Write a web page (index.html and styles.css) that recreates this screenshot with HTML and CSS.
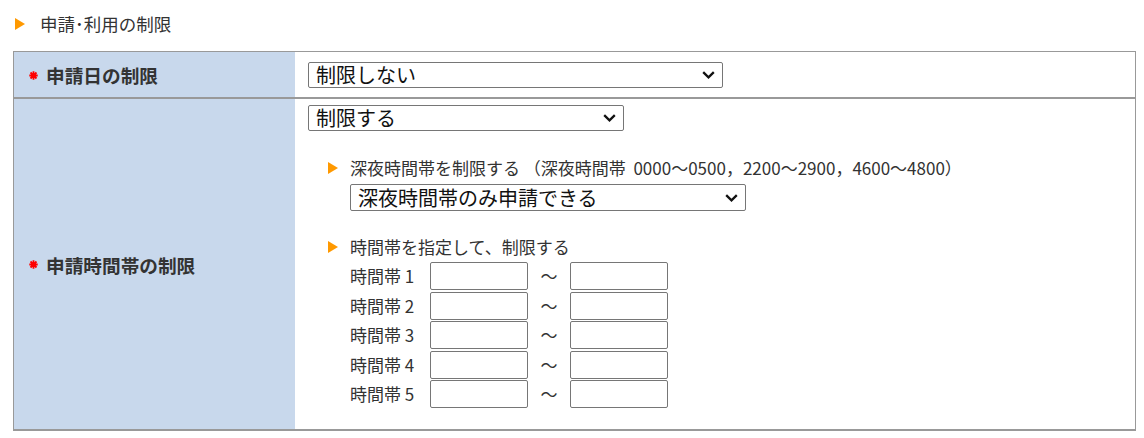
FILE: index.html
```html
<!DOCTYPE html>
<html lang="ja">
<head>
<meta charset="utf-8">
<title>申請・利用の制限</title>
<link rel="stylesheet" href="styles.css">
</head>
<body>
<div class="page">
  <h2 class="section-title"><span class="tri"></span>申請･利用の制限</h2>
  <div class="form">
    <div class="label row1"><span class="req"><svg width="9" height="9" viewBox="0 0 9 9"><path d="M4.5 0.3V8.7M0.3 4.5H8.7M1.5 1.5L7.5 7.5M7.5 1.5L1.5 7.5" stroke="#f00" stroke-width="1.8"/></svg></span>申請日の制限</div>
    <div class="value row1">
      <span class="select sel1"><select><option>制限しない</option></select><svg class="chev" width="13" height="8" viewBox="0 0 13 8"><path d="M1.2 1.2L6.5 6.3L11.8 1.2" fill="none" stroke="#111" stroke-width="2.3"/></svg></span>
    </div>
    <div class="label row2"><span class="req"><svg width="9" height="9" viewBox="0 0 9 9"><path d="M4.5 0.3V8.7M0.3 4.5H8.7M1.5 1.5L7.5 7.5M7.5 1.5L1.5 7.5" stroke="#f00" stroke-width="1.8"/></svg></span>申請時間帯の制限</div>
    <div class="value row2 stack">
      <span class="select sel2"><select><option>制限する</option></select><svg class="chev" width="13" height="8" viewBox="0 0 13 8"><path d="M1.2 1.2L6.5 6.3L11.8 1.2" fill="none" stroke="#111" stroke-width="2.3"/></svg></span>
      <div class="sub sub1">
        <p class="sub-title"><span class="tri"></span>深夜時間帯を制限する （深夜時間帯&nbsp;&nbsp;0000～0500，2200～2900，4600～4800）</p>
        <span class="select sel3"><select><option>深夜時間帯のみ申請できる</option></select><svg class="chev" width="13" height="8" viewBox="0 0 13 8"><path d="M1.2 1.2L6.5 6.3L11.8 1.2" fill="none" stroke="#111" stroke-width="2.3"/></svg></span>
      </div>
      <div class="sub sub2">
        <p class="sub-title"><span class="tri"></span>時間帯を指定して、制限する</p>
        <div class="times">
          <span class="tlabel">時間帯 1</span><input class="tin" type="text"><span class="tilde">～</span><input class="tin" type="text">
          <span class="tlabel">時間帯 2</span><input class="tin" type="text"><span class="tilde">～</span><input class="tin" type="text">
          <span class="tlabel">時間帯 3</span><input class="tin" type="text"><span class="tilde">～</span><input class="tin" type="text">
          <span class="tlabel">時間帯 4</span><input class="tin" type="text"><span class="tilde">～</span><input class="tin" type="text">
          <span class="tlabel">時間帯 5</span><input class="tin" type="text"><span class="tilde">～</span><input class="tin" type="text">
        </div>
      </div>
    </div>
  </div>
</div>
</body>
</html>
```

FILE: styles.css
```css
html, body {
  margin: 0;
  padding: 0;
  background: #fff;
}
body {
  font-family: "Noto Sans CJK JP", "Noto Sans", sans-serif;
  color: #333;
}
.page {
  padding: 0 0 0 13px;
  width: 1123px;
}
.section-title {
  margin: 0;
  height: 51px;
  display: flex;
  align-items: center;
  padding: 0 0 4px 2px;
  font-size: 17.5px;
  font-weight: normal;
  line-height: 20px;
  color: #333;
  box-sizing: border-box;
}
.tri {
  display: inline-block;
  width: 0;
  height: 0;
  border-left: 10px solid #ff9900;
  border-top: 6px solid transparent;
  border-bottom: 6px solid transparent;
}
.section-title .tri {
  margin-right: 15px;
}
.form {
  display: grid;
  grid-template-columns: 281px 1fr;
  border: 1px solid #999;
  border-bottom: 2px solid #999;
  width: 1123px;
  box-sizing: border-box;
}
.row1 {
  height: 47px;
  border-bottom: 2px solid #999;
  box-sizing: border-box;
}
.label {
  background: #c8d8ec;
  display: flex;
  align-items: center;
  padding-left: 15px;
  font-size: 18.67px;
  font-weight: bold;
  color: #333;
}
.req {
  display: inline-flex;
  margin-right: 8px;
  margin-top: 1px;
}
.value {
  padding-left: 13px;
  display: flex;
  align-items: center;
}
.value.row1 {
  padding-top: 1px;
}
.select {
  position: relative;
  display: inline-block;
}
.select select {
  appearance: none;
  -webkit-appearance: none;
  display: block;
  box-sizing: border-box;
  height: 26px;
  border: 1px solid #767676;
  border-radius: 2px;
  background: #fff;
  font-family: "Noto Sans CJK JP", "Noto Sans", sans-serif;
  font-size: 20px;
  line-height: 24px;
  color: #111;
  padding: 0 0 0 7px;
  margin: 0;
}
.chev {
  position: absolute;
  right: 8px;
  top: 50%;
  margin-top: -4px;
  pointer-events: none;
}
.sel1 select { width: 415px; }
.sel2 select { width: 316px; }
.sel3 select { width: 396px; height: 27px; }
.stack {
  flex-direction: column;
  align-items: flex-start;
  padding-top: 6px;
  padding-bottom: 21px;
}
.sub {
  padding-left: 42px;
}
.sub-title {
  margin: 0;
  position: relative;
  font-size: 17px;
  line-height: 20px;
  height: 20px;
  white-space: nowrap;
}
.sub-title .tri {
  position: absolute;
  left: -22px;
  top: 4px;
}
.sub1 {
  margin-top: 27px;
}
.sub1 .select {
  margin-top: 6px;
}
.sub2 {
  margin-top: 26px;
}
.times {
  margin-top: 5px;
  display: grid;
  grid-template-columns: 80px 98px 42px 98px;
  grid-auto-rows: 28px;
  row-gap: 1.5px;
  align-items: center;
}
.tlabel {
  font-size: 17px;
  line-height: 20px;
  white-space: nowrap;
}
.tilde {
  font-size: 17px;
  text-align: center;
  line-height: 20px;
}
.tin {
  box-sizing: border-box;
  width: 98px;
  height: 28px;
  border: 1px solid #767676;
  border-radius: 2px;
  background: #fff;
  margin: 0;
  padding: 0 4px;
  font-size: 16px;
}
```
